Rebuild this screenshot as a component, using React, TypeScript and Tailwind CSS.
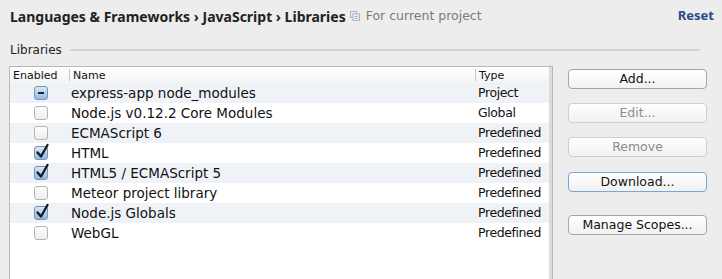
import React from "react";

type State = "on" | "off" | "mixed";
const rows: { name: string; type: string; state: State }[] = [
  { name: "express-app node_modules", type: "Project", state: "mixed" },
  { name: "Node.js v0.12.2 Core Modules", type: "Global", state: "off" },
  { name: "ECMAScript 6", type: "Predefined", state: "off" },
  { name: "HTML", type: "Predefined", state: "on" },
  { name: "HTML5 / ECMAScript 5", type: "Predefined", state: "on" },
  { name: "Meteor project library", type: "Predefined", state: "off" },
  { name: "Node.js Globals", type: "Predefined", state: "on" },
  { name: "WebGL", type: "Predefined", state: "off" },
];

function Check({ state }: { state: State }) {
  if (state === "off") {
    return (
      <div className="w-[14px] h-[14px] rounded-[3px] border border-[#b4b4b4] bg-gradient-to-b from-white to-[#ececec]" />
    );
  }
  return (
    <div className="relative w-[14px] h-[14px] rounded-[3px] border border-[#7893b5] bg-gradient-to-b from-[#d9e9f8] to-[#8ebbe6]">
      {state === "on" ? (
        <svg className="absolute left-[0px] top-[-4px]" width="15" height="16" viewBox="0 0 15 16">
          <path d="M2.5 9.5 L6 13.5 L12.5 2" fill="none" stroke="#1c1c1c" strokeWidth="2.4" strokeLinecap="round" strokeLinejoin="round" />
        </svg>
      ) : (
        <div className="absolute left-[3px] right-[3px] top-[5px] h-[2px] bg-[#222]" />
      )}
    </div>
  );
}

function Btn({ label, disabled, focus }: { label: string; disabled?: boolean; focus?: boolean }) {
  const border = focus ? "border-[#78a6dc]" : disabled ? "border-[#cfcfcf]" : "border-[#a6a6a6]";
  const color = disabled ? "text-[#8c8c8c]" : "text-[#111]";
  return (
    <div
      className={`h-[20px] w-[139px] rounded-[4px] border ${border} ${color} bg-gradient-to-b from-white to-[#f1f1f1] flex items-center justify-center text-[12.5px] leading-none`}
    >
      {label}
    </div>
  );
}

export default function App() {
  return (
    <div
      className="w-[722px] h-[279px] overflow-hidden bg-[#ededed] text-[#111]"
      style={{ fontFamily: '"DejaVu Sans", "Noto Sans", sans-serif' }}
    >
      {/* Title */}
      <div className="flex items-center h-[20px] mt-[6px] pl-[10px] pr-[8px]">
        <span className="text-[14px] font-bold text-[#222]" style={{ fontFamily: '"Noto Sans", sans-serif' }}>
          Languages &amp; Frameworks › JavaScript › Libraries
        </span>
        <svg className="ml-[4px]" width="10" height="10" viewBox="0 0 10 10">
          <rect x="0.5" y="0.5" width="6" height="6" fill="none" stroke="#a9b4c4" />
          <rect x="3" y="3" width="6.5" height="6.5" fill="#eef2f7" stroke="#a9b4c4" />
          <path d="M4.5 5.5h3.5M4.5 7.5h3.5" stroke="#a9b4c4" />
        </svg>
        <span className="ml-[6px] text-[12.5px] text-[#7b7b7b]">For current project</span>
        <span className="ml-auto text-[13px] font-bold text-[#2b4a86]" style={{ fontFamily: '"Noto Sans", sans-serif' }}>Reset</span>
      </div>

      {/* Group label */}
      <div className="flex items-center mt-[17px] pl-[10px] pr-[22px] h-[14px]">
        <span className="text-[12px] text-[#222]">Libraries</span>
        <div className="ml-[8px] flex-1 h-[2px] bg-[#d4d4d4]" />
      </div>

      <div className="flex mt-[9px] pl-[9px]">
        {/* Table */}
        <div className="w-[544px] h-[220px] border border-[#b9b9b9] bg-white flex flex-col text-[13.5px]">
          <div className="flex h-[16px] bg-gradient-to-b from-white to-[#f4f4f4] text-[11px] leading-none">
            <div className="w-[59px] pl-[3px] flex items-center">Enabled</div>
            <div className="w-[1px] my-[2px] bg-[#c4c4c4]" />
            <div className="w-[405px] pl-[3px] flex items-center">Name</div>
            <div className="w-[1px] my-[2px] bg-[#c4c4c4]" />
            <div className="flex-1 pl-[3px] flex items-center">Type</div>
            <div className="w-[3px] bg-[#dcdcdc]" />
          </div>
          <div className="flex-1 flex">
            <div className="flex-1 flex flex-col">
              {rows.map((r, i) => (
                <div key={r.name} className={`flex items-center h-[20px] ${i % 2 === 0 ? "bg-[#eff3f8]" : "bg-white"}`}>
                  <div className="w-[60px] flex justify-center pl-[1px]">
                    <Check state={r.state} />
                  </div>
                  <div className="w-[408px] pl-[1px] whitespace-pre">{r.name}</div>
                  <div className="flex-1 text-[12.5px] tracking-[-0.4px]">{r.type}</div>
                </div>
              ))}
            </div>
            <div className="w-[3px] bg-[#dcdcdc]" />
          </div>
        </div>

        {/* Buttons */}
        <div className="ml-[15px] mt-[3px] flex flex-col">
          <Btn label="Add..." />
          <div className="mt-[14px]">
            <Btn label="Edit..." disabled />
          </div>
          <div className="mt-[14px]">
            <Btn label="Remove" disabled />
          </div>
          <div className="mt-[15px]">
            <Btn label="Download..." focus />
          </div>
          <div className="mt-[23px]">
            <Btn label="Manage Scopes..." />
          </div>
        </div>
      </div>
    </div>
  );
}
